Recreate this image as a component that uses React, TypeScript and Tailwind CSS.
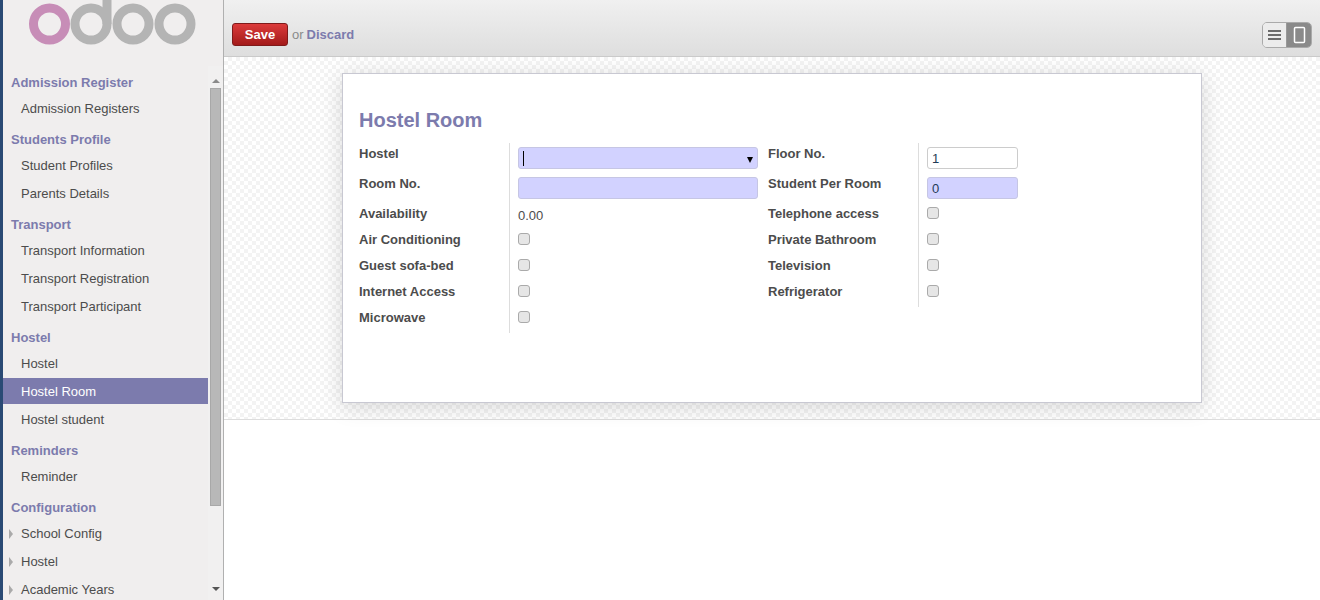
import { ReactNode } from "react";

type MenuGroup = {
  title: string;
  items: { label: string; active?: boolean; caret?: boolean }[];
};

const menu: MenuGroup[] = [
  { title: "Admission Register", items: [{ label: "Admission Registers" }] },
  { title: "Students Profile", items: [{ label: "Student Profiles" }, { label: "Parents Details" }] },
  {
    title: "Transport",
    items: [{ label: "Transport Information" }, { label: "Transport Registration" }, { label: "Transport Participant" }],
  },
  {
    title: "Hostel",
    items: [{ label: "Hostel" }, { label: "Hostel Room", active: true }, { label: "Hostel student" }],
  },
  { title: "Reminders", items: [{ label: "Reminder" }] },
  {
    title: "Configuration",
    items: [
      { label: "School Config", caret: true },
      { label: "Hostel", caret: true },
      { label: "Academic Years", caret: true },
    ],
  },
];

function Logo() {
  return (
    <svg width="170" height="48" viewBox="0 0 170 48" className="absolute left-[23px] top-0" fill="none" strokeWidth="9">
      <circle cx="23.5" cy="24" r="16" stroke="#c78db7" />
      <circle cx="65" cy="24" r="16" stroke="#b4b4b4" />
      <path d="M81 24V-2" stroke="#b4b4b4" />
      <circle cx="107" cy="24" r="16" stroke="#b4b4b4" />
      <circle cx="149" cy="24" r="16" stroke="#b4b4b4" />
    </svg>
  );
}

function Sidebar() {
  return (
    <aside className="flex h-[600px] w-[224px] shrink-0 flex-col overflow-hidden border-r border-[#b0b0b0] border-l-[3px] border-l-[#2a4a74] bg-[#f0eeee]">
      <div className="relative h-[66px] shrink-0">
        <Logo />
      </div>
      <div className="flex min-h-0 flex-1">
        <nav className="w-[205px] shrink-0">
          {menu.map((group) => (
            <div key={group.title} className="mt-[5px]">
              <div className="flex h-6 items-center pl-2 text-[13px] font-bold text-[#7c7bad]">{group.title}</div>
              {group.items.map((item) => (
                <div key={item.label} className="relative pb-[2px]">
                  {item.caret && (
                    <span className="absolute left-[6px] top-[9px] h-0 w-0 border-y-[5px] border-l-[4px] border-y-transparent border-l-[#aaaaaa]" />
                  )}
                  <div
                    className={
                      item.active
                        ? "flex h-[26px] items-center bg-[#7c7bad] pt-[2px] pl-[18px] text-[13px] text-white"
                        : "flex h-[26px] items-center pt-[2px] pl-[18px] text-[13px] text-[#4c4c4c]"
                    }
                  >
                    {item.label}
                  </div>
                </div>
              ))}
            </div>
          ))}
        </nav>
        <div className="flex w-[15px] shrink-0 flex-col items-center bg-[#f1f0f0] pt-[13px]">
          <span className="h-0 w-0 border-x-[4px] border-b-[4px] border-x-transparent border-b-[#8a8a8a]" />
          <div className="mt-[5px] h-[418px] w-[11px] border border-[#a8a8a8] bg-[#b8b8b8]" />
          <span className="mt-[81px] h-0 w-0 border-x-[4px] border-t-[4px] border-x-transparent border-t-[#555555]" />
        </div>
      </div>
    </aside>
  );
}

function Toolbar() {
  return (
    <header className="flex h-[57px] shrink-0 items-center justify-between border-b border-[#cacaca] bg-gradient-to-b from-[#f0f0f0] to-[#dedede] pr-2 pl-2">
      <div className="mt-[13px] flex items-center text-[13px]">
        <button className="mr-[4px] h-[23px] w-[56px] rounded-[3px] border border-[#7f1a1a] bg-gradient-to-b from-[#dc3a3a] to-[#a31a1a] text-[13px] font-bold text-white">
          Save
        </button>
        <span className="mr-[3px] text-[#8a8a8a]">or</span>
        <a className="font-bold text-[#7c7bad]">Discard</a>
      </div>
      <div className="mt-[13px] flex h-[26px] w-[50px] overflow-hidden rounded-[5px] border border-[#aaaaaa]">
        <div className="flex w-6 items-center justify-center border-r border-[#999999] bg-[#ececec]">
          <svg width="13" height="12" viewBox="0 0 13 12">
            <path d="M0 2h13M0 6h13M0 10h13" stroke="#404040" strokeWidth="1.5" />
          </svg>
        </div>
        <div className="flex flex-1 items-center justify-center bg-[#8a8a8a]">
          <svg width="13" height="18" viewBox="0 0 13 18" fill="none">
            <rect x="1.5" y="1.5" width="10" height="15" rx="1" stroke="#ffffff" strokeWidth="1.5" />
          </svg>
        </div>
      </div>
    </header>
  );
}

function Check() {
  return (
    <div className="pt-[4px]">
      <span className="block h-3 w-3 rounded-[3px] border border-[#aaaaaa] bg-[#e6e6e6]" />
    </div>
  );
}

const required = "h-[22px] rounded-[3px] border border-[#c6c6e4] bg-[#d2d2ff]";

type Row = { h: string; left: string; leftField: ReactNode; right?: string; rightField?: ReactNode };

const rows: Row[] = [
  {
    h: "h-[30px]",
    left: "Hostel",
    leftField: (
      <div className={`relative mt-[4px] w-[240px] ${required}`}>
        <span className="absolute left-[4px] top-[3px] h-[15px] w-px bg-black" />
        <span className="absolute right-[4px] top-[9px] h-0 w-0 border-x-[3.5px] border-t-[6px] border-x-transparent border-t-black" />
      </div>
    ),
    right: "Floor No.",
    rightField: (
      <input
        readOnly
        defaultValue="1"
        className="mt-[4px] h-[22px] w-[91px] rounded-[3px] border border-[#cccccc] bg-white px-1 text-[13px] text-[#1f3b57]"
      />
    ),
  },
  {
    h: "h-[30px]",
    left: "Room No.",
    leftField: <div className={`mt-[4px] w-[240px] ${required}`} />,
    right: "Student Per Room",
    rightField: (
      <input
        readOnly
        defaultValue="0"
        className={`mt-[4px] w-[91px] px-1 text-[13px] text-[#1f3b57] ${required}`}
      />
    ),
  },
  {
    h: "h-[26px]",
    left: "Availability",
    leftField: <div className="pt-[3px] text-[13px] text-[#4c4c4c]">0.00</div>,
    right: "Telephone access",
    rightField: <Check />,
  },
  {
    h: "h-[26px]",
    left: "Air Conditioning",
    leftField: <Check />,
    right: "Private Bathroom",
    rightField: <Check />,
  },
  {
    h: "h-[26px]",
    left: "Guest sofa-bed",
    leftField: <Check />,
    right: "Television",
    rightField: <Check />,
  },
  {
    h: "h-[26px]",
    left: "Internet Access",
    leftField: <Check />,
    right: "Refrigerator",
    rightField: <Check />,
  },
  {
    h: "h-[26px]",
    left: "Microwave",
    leftField: <Check />,
  },
];

function Label({ text }: { text: string }) {
  return <div className="pt-[1px] text-[13px] font-bold text-[#4c4c4c]">{text}</div>;
}

function HostelRoomForm() {
  return (
    <div className="h-[363px] shrink-0 border-b border-[#dddddd] bg-[repeating-conic-gradient(#f3f3f3_0_25%,#ffffff_0_50%)] bg-[length:8px_8px] pt-4 pl-[118px]">
      <div className="h-[330px] w-[860px] border border-[#c8c8d2] bg-white px-4 pt-[33px] shadow-[0_4px_20px_rgba(0,0,0,0.15)]">
        <h1 className="h-[36px] text-[20px] leading-[26px] font-bold text-[#7c7bad]">Hostel Room</h1>
        <div>
          {rows.map((row) => (
            <div key={row.left} className={`grid grid-cols-[150px_259px_150px_1fr] ${row.h}`}>
              <Label text={row.left} />
              <div className="border-l border-[#dddddd] pl-2">{row.leftField}</div>
              {row.right ? <Label text={row.right} /> : <div />}
              {row.right ? <div className="border-l border-[#dddddd] pl-2">{row.rightField}</div> : <div />}
            </div>
          ))}
        </div>
      </div>
    </div>
  );
}

export default function App() {
  return (
    <div className="flex h-[600px] w-[1320px] overflow-hidden bg-white font-['Liberation_Sans',Arial,sans-serif]">
      <Sidebar />
      <main className="flex min-w-0 flex-1 flex-col">
        <Toolbar />
        <HostelRoomForm />
      </main>
    </div>
  );
}
